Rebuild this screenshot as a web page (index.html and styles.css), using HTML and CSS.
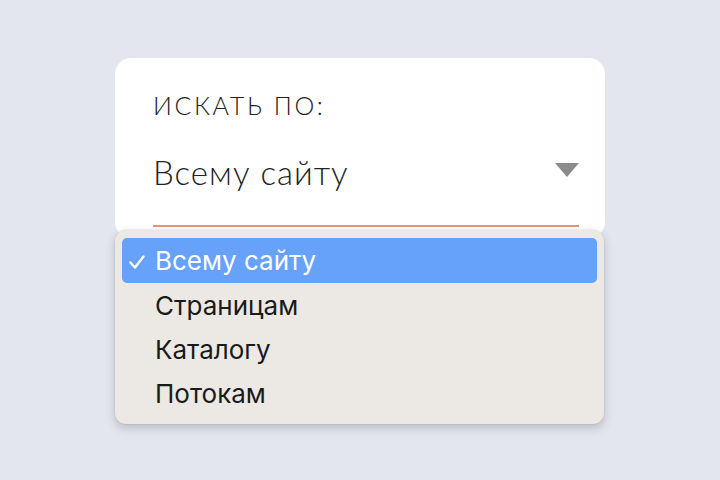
FILE: index.html
```html
<!DOCTYPE html>
<html lang="ru">
<head>
<meta charset="utf-8">
<link rel="stylesheet" href="styles.css">
</head>
<body>
<div class="stage">
  <div class="card">
    <div class="label">ИСКАТЬ ПО:</div>
    <div class="select">
      <span class="value">Всему сайту</span>
      <svg class="caret" width="24" height="14" viewBox="0 0 24 14"><path d="M0 0H24L12 14Z" fill="#8c8c8c"/></svg>
    </div>
    <div class="menu">
      <div class="item active"><span class="check"><svg width="16" height="14" viewBox="0 0 16 14"><path d="M1.5 7.5L6 12.5L14.5 1.5" fill="none" stroke="#fff" stroke-width="2.4" stroke-linecap="round" stroke-linejoin="round"/></svg></span>Всему сайту</div>
      <div class="item"><span class="check"></span>Страницам</div>
      <div class="item"><span class="check"></span>Каталогу</div>
      <div class="item"><span class="check"></span>Потокам</div>
    </div>
  </div>
</div>
</body>
</html>
```
FILE: styles.css
```css
html, body {
  margin: 0;
  padding: 0;
}
body {
  background: #e3e6ee;
  width: 720px;
  height: 480px;
  overflow: hidden;
}
.stage {
  display: flex;
  justify-content: center;
  padding-top: 58px;
}
.card {
  position: relative;
  box-sizing: border-box;
  width: 490px;
  height: 180px;
  background: #fff;
  border-radius: 16px;
  padding: 32px 26px 0 38px;
  font-family: Lato, "Noto Sans", sans-serif;
  font-weight: 300;
  color: #222;
}
.label {
  font-size: 25px;
  letter-spacing: 2.6px;
  line-height: 31px;
}
.select {
  margin-top: 28px;
  display: flex;
  align-items: center;
  justify-content: space-between;
  height: 46px;
  padding-bottom: 30px;
  border-bottom: 2px solid #e8967b;
}
.value {
  font-size: 33px;
  letter-spacing: 1px;
  line-height: 46px;
}
.caret {
  display: block;
  margin-top: -4px;
}
.menu {
  position: absolute;
  left: 0;
  right: 1px;
  top: 172px;
  box-sizing: border-box;
  height: 194px;
  padding: 8px 7px;
  background: #ece9e4;
  border-radius: 11px;
  box-shadow: 0 4px 10px rgba(60, 60, 80, 0.25), 0 0 0 0.5px rgba(0,0,0,0.08);
  font-family: Inter, "Noto Sans", sans-serif;
  font-weight: 400;
  color: #1a1a1a;
}
.item {
  display: flex;
  align-items: center;
  height: 44px;
  font-size: 26px;
  border-radius: 5px;
}
.item.active {
  background: #66a1fa;
  color: #fff;
  height: 45px;
}
.check {
  display: flex;
  align-items: center;
  width: 33px;
  padding-left: 7px;
  padding-top: 3px;
  box-sizing: border-box;
}
.check svg {
  display: block;
}
```
